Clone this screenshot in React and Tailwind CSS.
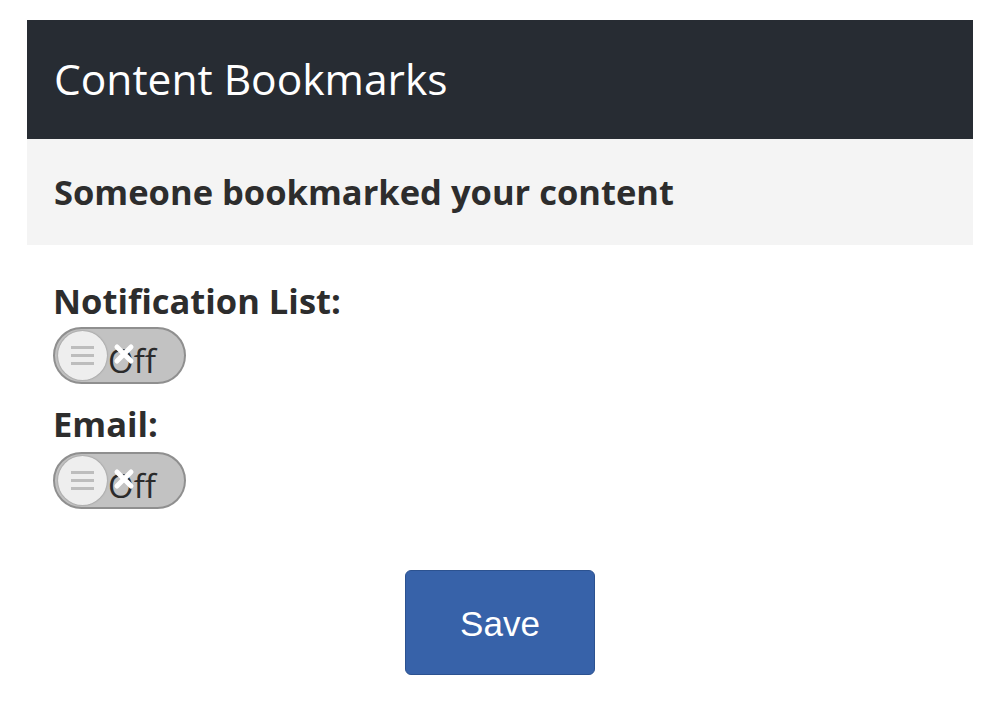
import React from "react";

const Toggle = () => (
  <div className="relative w-[133px] h-[57px] rounded-full border-2 border-[#8f8f8f] bg-[#c2c2c2] flex items-center">
    {/* knob */}
    <div className="ml-[3px] w-[49px] h-[49px] rounded-full bg-[#eeeeee] shadow-[0_0_2px_rgba(0,0,0,0.35)] flex flex-col items-center justify-center gap-[5px]">
      <span className="block w-[23px] h-[3px] bg-[#bdbdbd]" />
      <span className="block w-[23px] h-[3px] bg-[#bdbdbd]" />
      <span className="block w-[23px] h-[3px] bg-[#bdbdbd]" />
    </div>
    <span className="ml-[1px] text-[33px] leading-none text-[#2b2b2b] font-['Open_Sans',sans-serif] mt-[9px]">
      Off
    </span>
    {/* x mark over the label */}
    <svg
      className="absolute left-[58px] top-[14px]"
      width="22"
      height="22"
      viewBox="0 0 22 22"
    >
      <path
        d="M4 4 L18 18 M18 4 L4 18"
        stroke="#ffffff"
        strokeWidth="5"
        strokeLinecap="round"
      />
    </svg>
  </div>
);

export default function App() {
  return (
    <div className="min-h-[710px] bg-white font-['Open_Sans',sans-serif] px-[27px] pt-[20px]">
      {/* Header */}
      <div className="bg-[#272c33] h-[119px] flex items-center px-[27px]">
        <h1 className="text-white text-[42.5px] font-normal leading-none">
          Content Bookmarks
        </h1>
      </div>

      {/* Sub header */}
      <div className="bg-[#f4f4f4] h-[106px] flex items-center px-[27px]">
        <h2 className="text-[#2d2d2d] text-[34.5px] font-bold leading-none">
          Someone bookmarked your content
        </h2>
      </div>

      {/* Settings */}
      <div className="px-[26px] pt-[36px]">
        <div className="text-[#2d2d2d] text-[34.5px] font-bold leading-[40px]">
          Notification List:
        </div>
        <div className="mt-[6px]">
          <Toggle />
        </div>
        <div className="text-[#2d2d2d] text-[34.5px] font-bold leading-[40px] mt-[20px]">
          Email:
        </div>
        <div className="mt-[8px]">
          <Toggle />
        </div>
      </div>

      <div className="flex justify-center pt-[61px]">
        <button className="w-[190px] h-[105px] rounded-[6px] bg-[#3762a9] border border-[#2c5290] text-white text-[35px] pt-[4px] font-['Liberation_Sans',Arial,sans-serif]">
          Save
        </button>
      </div>
    </div>
  );
}
